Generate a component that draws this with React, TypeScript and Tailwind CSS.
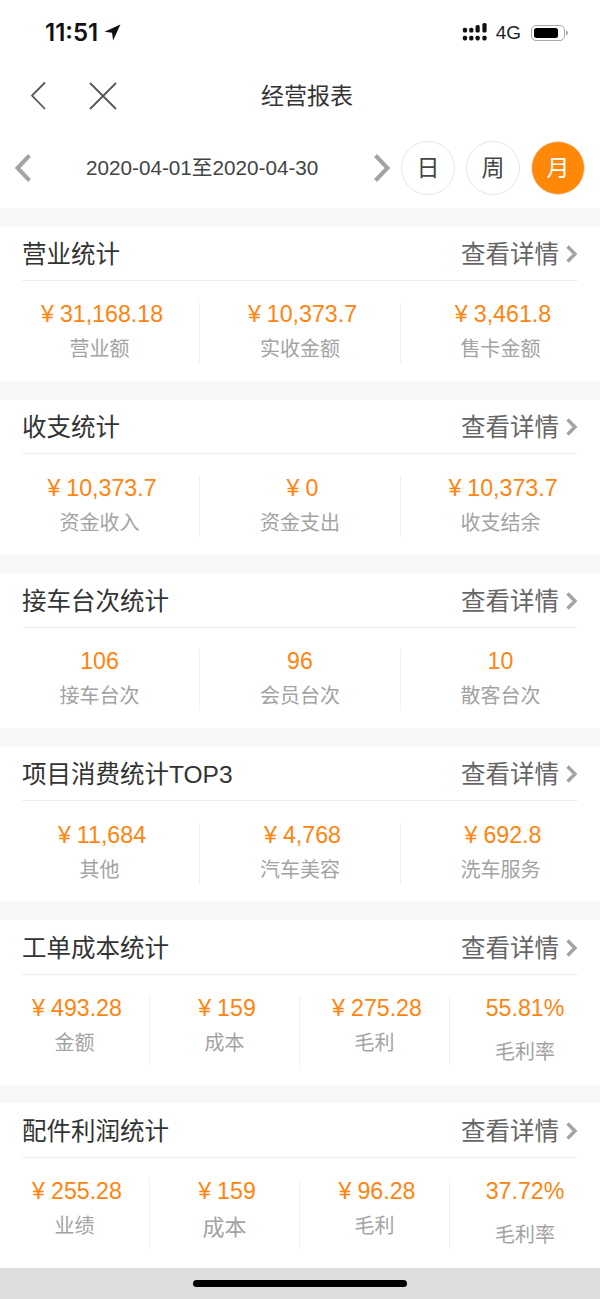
const FF = '"Liberation Sans","Noto Sans CJK SC",sans-serif';

type Item = { v: string; l: string; tall?: boolean; low?: boolean };
type Sec = { t: string; items: Item[]; h: string };

const secs: Sec[] = [
  { t: "营业统计", h: "h-[155px]", items: [{ v: "¥31,168.18", l: "营业额" }, { v: "¥10,373.7", l: "实收金额" }, { v: "¥3,461.8", l: "售卡金额" }] },
  { t: "收支统计", h: "h-[155px]", items: [{ v: "¥10,373.7", l: "资金收入" }, { v: "¥0", l: "资金支出" }, { v: "¥10,373.7", l: "收支结余" }] },
  { t: "接车台次统计", h: "h-[155px]", items: [{ v: "106", l: "接车台次" }, { v: "96", l: "会员台次" }, { v: "10", l: "散客台次" }] },
  { t: "项目消费统计TOP3", h: "h-[155px]", items: [{ v: "¥11,684", l: "其他" }, { v: "¥4,768", l: "汽车美容" }, { v: "¥692.8", l: "洗车服务" }] },
  { t: "工单成本统计", h: "h-[164.5px]", items: [{ v: "¥493.28", l: "金额" }, { v: "¥159", l: "成本" }, { v: "¥275.28", l: "毛利" }, { v: "55.81%", l: "毛利率", low: true }] },
  { t: "配件利润统计", h: "h-[165px]", items: [{ v: "¥255.28", l: "业绩" }, { v: "¥159", l: "成本", tall: true }, { v: "¥96.28", l: "毛利" }, { v: "37.72%", l: "毛利率", low: true }] },
];

function Money({ v }: { v: string }) {
  if (v.startsWith("¥")) {
    return (
      <span className="whitespace-nowrap pl-[5px]">
        <span className="mr-[6px]">¥</span>
        {v.slice(1)}
      </span>
    );
  }
  return <span className="whitespace-nowrap">{v}</span>;
}

function Section({ s }: { s: Sec }) {
  const four = s.items.length === 4;
  return (
    <section className={`bg-white ${s.h}`}>
      <div className="mx-[22px] flex h-[54.5px] items-center justify-between border-b border-[#eeeeee] pt-[4px]">
        <span className="text-[24.5px] leading-none text-[#333333]">{s.t}</span>
        <span className="flex items-center text-[24.5px] leading-none text-[#666666]">
          查看详情
          <svg width="12" height="18" viewBox="0 0 12 18" className="ml-[7px] -mt-[2px]">
            <path d="M1.500 1.500L9 9l-7.500 7.500" fill="none" stroke="#a3a3a3" strokeWidth="3.400" />
          </svg>
        </span>
      </div>
      <div className={`mt-[21.5px] grid h-[57px] ${four ? "grid-cols-4" : "grid-cols-3"}`}>
        {s.items.map((it, i) => (
          <div
            key={i}
            className={`flex flex-col items-center ${
              four
                ? i < 3 ? "border-r border-[#f1f1f1]" : ""
                : i === 0 ? "border-r border-[#f1f1f1]" : i === 2 ? "border-l border-[#f1f1f1]" : ""
            }`}
          >
            <div className="-mt-[2px] text-[23.2px] leading-[28px] text-[#ff8410]"><Money v={it.v} /></div>
            <div
              className={`${it.tall ? "mt-[8px] text-[22px] leading-[30px]" : it.low ? "mt-[16px] text-[20px] leading-[28px]" : "mt-[7px] text-[20px] leading-[28px]"} whitespace-nowrap text-[#a3a3a3]`}
            >
              {it.l}
            </div>
          </div>
        ))}
      </div>
    </section>
  );
}

function StatusBar() {
  return (
    <div className="flex h-[64px] items-center justify-between pl-[45px] pr-[32px] pt-[1px]">
      <div className="flex items-center gap-[6px]">
        <span className="text-[24px] leading-none text-[#111111]" style={{ fontFamily: '"Inter",sans-serif', fontWeight: 600 }}>11:51</span>
        <svg width="17" height="17" viewBox="0 0 15 15"><path d="M14.5.5L.5 6.800l6.600.9.9 6.800z" fill="#111" /></svg>
      </div>
      <div className="flex items-center gap-[8px]">
        <svg width="26" height="19" viewBox="0 0 23 18" fill="#111">
          <rect x="0" y="4.500" width="4" height="4.500" rx="1.500" /><rect x="0" y="12" width="4" height="4.500" rx="1.500" />
          <rect x="6" y="4.500" width="4" height="4.500" rx="1.500" /><rect x="6" y="12" width="4" height="4.500" rx="1.500" />
          <rect x="12" y="2" width="4" height="7" rx="1.500" /><rect x="12" y="12" width="4" height="4.500" rx="1.500" />
          <rect x="18.500" y="0" width="4" height="9" rx="1.500" /><rect x="18.500" y="12" width="4" height="4.500" rx="1.500" />
        </svg>
        <span className="text-[19px] leading-none text-[#222222]">4G</span>
        <svg width="37" height="18" viewBox="0 0 37 18" className="ml-[2px]">
          <rect x="0.500" y="1.500" width="33" height="15" rx="4.500" fill="none" stroke="#a8a8a8" />
          <rect x="3" y="4" width="24" height="10" rx="2.500" fill="#000" />
          <path d="M35 6.500c1.300.4 2 1.300 2 2.500s-.7 2.100-2 2.500z" fill="#a8a8a8" />
        </svg>
      </div>
    </div>
  );
}

function Header() {
  return (
    <div className="flex h-[64px] items-center">
      <svg width="18" height="30" viewBox="0 0 18 30" className="ml-[30px]">
        <path d="M15 1.500L2 14.500 15 28" fill="none" stroke="#555555" strokeWidth="1.800" />
      </svg>
      <svg width="30" height="30" viewBox="0 0 30 30" className="ml-[40px]">
        <path d="M2 2l26 26M28 2L2 28" fill="none" stroke="#555555" strokeWidth="1.800" />
      </svg>
      <span className="ml-[143px] text-[23px] leading-none text-[#333333]">经营报表</span>
    </div>
  );
}

function DateRow() {
  return (
    <div className="flex h-[80px] items-start pt-[13px]">
      <svg width="18" height="28" viewBox="0 0 18 28" className="ml-[14px] mt-[13px]">
        <path d="M15.500 1.500L3.500 14l12 12.500" fill="none" stroke="#a3a3a3" strokeWidth="4" />
      </svg>
      <span className="ml-[54px] mt-[15px] w-[234px] whitespace-nowrap text-[20.7px] leading-[24px] text-[#444444]">2020-04-01至2020-04-30</span>
      <svg width="18" height="28" viewBox="0 0 18 28" className="ml-[53px] mt-[13px]">
        <path d="M2.500 1.500L14.500 14l-12 12.500" fill="none" stroke="#a3a3a3" strokeWidth="4" />
      </svg>
      <div className="ml-[10px] flex">
        <div className="flex h-[54px] w-[54px] items-center justify-center rounded-full border border-[#e5e5e5] text-[23px] text-[#444444]">日</div>
        <div className="ml-[11px] flex h-[54px] w-[54px] items-center justify-center rounded-full border border-[#e5e5e5] text-[23px] text-[#444444]">周</div>
        <div className="ml-[11px] flex h-[54px] w-[54px] items-center justify-center rounded-full border border-[#e5e5e5] bg-[#ff8808] text-[23px] text-white">月</div>
      </div>
    </div>
  );
}

export default function App() {
  return (
    <div className="flex h-[1299px] w-[600px] flex-col overflow-hidden bg-[#f7f7f7]" style={{ fontFamily: FF }}>
      <div className="h-[208px] bg-white">
        <StatusBar />
        <Header />
        <DateRow />
      </div>
      <div className="flex flex-col gap-[18.5px] pt-[18px]">
        {secs.map((s) => <Section key={s.t} s={s} />)}
      </div>
      <div className="mt-auto flex h-[31px] items-start justify-center bg-[#dedede] pt-[12px]">
        <div className="h-[7px] w-[214px] rounded-full bg-black" />
      </div>
    </div>
  );
}
